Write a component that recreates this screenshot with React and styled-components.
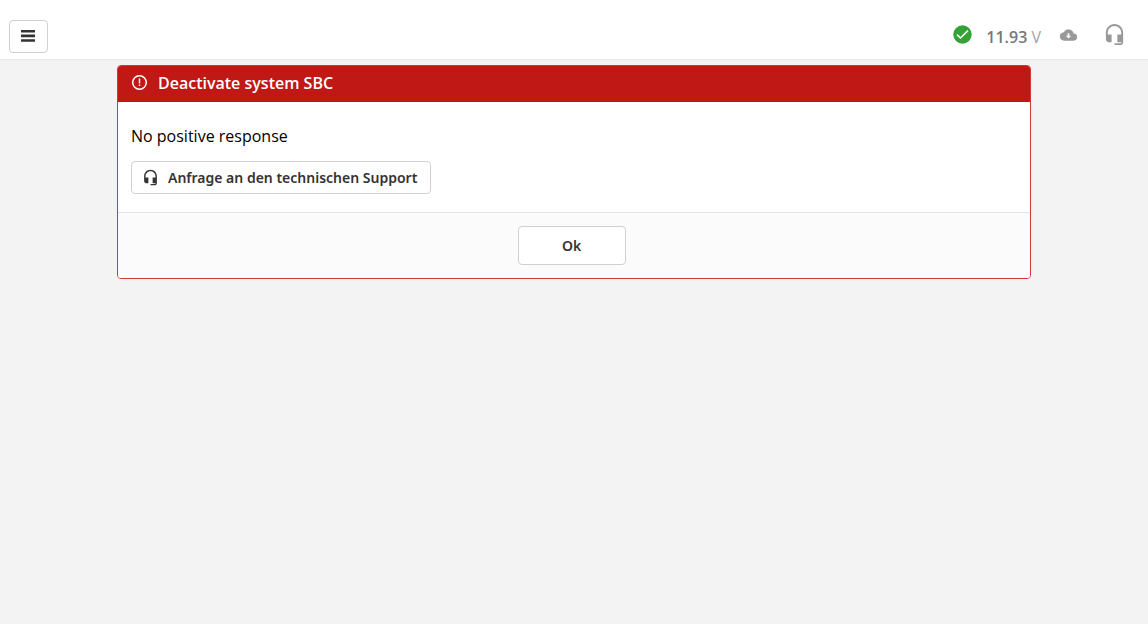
import React from 'react';
import styled, { createGlobalStyle } from 'styled-components';

const GlobalStyle = createGlobalStyle`
  *, *::before, *::after { box-sizing: border-box; }
  body {
    margin: 0;
    background: #fff;
    color: #000;
    font-family: "Open Sans", "Noto Sans", sans-serif;
    font-size: 16px;
  }
`;

const Page = styled.div`
  display: flex;
  flex-direction: column;
  min-height: 100vh;
  padding-bottom: 8px;
`;

const TopBar = styled.header`
  display: flex;
  align-items: center;
  justify-content: space-between;
  height: 60px;
  padding: 13px 22px 0 9px;
  border-bottom: 1px solid #eaeaea;
`;

const Button = styled.button`
  display: inline-flex;
  align-items: center;
  justify-content: center;
  border: 1px solid #d0d0d0;
  border-radius: 4px;
  background: #fff;
  color: #333;
  font: 600 14px/20px "Noto Sans", "Open Sans", sans-serif;
  cursor: pointer;
`;

const MenuButton = styled(Button)`
  width: 39px;
  height: 33px;
  padding: 0 1px 1px 0;
`;

const SupportButton = styled(Button)`
  height: 33px;
  gap: 9px;
  padding: 0 13px 0 10px;
`;

const OkButton = styled(Button)`
  width: 108px;
  height: 39px;
  margin-right: 5px;
`;

const Status = styled.div`
  display: flex;
  align-items: center;
  padding-bottom: 3px;
  color: #97999b;
`;

const Voltage = styled.span`
  margin: 4px 19px 0 14px;
  font-size: 16px;
  line-height: 22px;
  color: #a3a3a3;

  strong {
    font-weight: 600;
    color: #777;
  }
`;

const IconButton = styled.button`
  display: flex;
  padding: 0;
  border: 0;
  background: none;
  color: inherit;
  cursor: pointer;

  & + & { margin-left: 26px; }
`;

const Main = styled.main`
  flex: 1;
  padding: 5px 117px;
  background: #f3f3f3;
`;

const Dialog = styled.section`
  overflow: hidden;
  border: 1px solid #d0393a;
  border-radius: 4px;
  background: #fff;
`;

const DialogHeader = styled.header`
  display: flex;
  align-items: center;
  gap: 10px;
  height: 36px;
  padding: 0 13px 3px;
  background: #c01815;
  color: #fff;
`;

const Title = styled.h1`
  margin: 0;
  font-size: 16px;
  font-weight: 600;
  line-height: 22px;
`;

const DialogBody = styled.div`
  padding: 22px 13px 18px;
`;

const Message = styled.p`
  margin: 0 0 13px;
  font-size: 16px;
  line-height: 24px;
`;

const DialogFooter = styled.footer`
  display: flex;
  justify-content: center;
  padding: 13px;
  border-top: 1px solid #e4e4e4;
  background: #fbfbfb;
`;

const Icon = styled.svg`
  display: block;
  flex: none;
`;

const Headset = ({ size }) => (
  <Icon width={size} height={size} viewBox="0 0 24 24" fill="currentColor" aria-hidden="true">
    <path d="M12 1c-4.97 0-9 4.03-9 9v7c0 1.66 1.34 3 3 3h3v-8H5v-2c0-3.87 3.13-7 7-7s7 3.13 7 7v2h-4v8h4v1h-7v2h6c1.66 0 3-1.34 3-3V10c0-4.97-4.03-9-9-9z" />
  </Icon>
);

const Bars = () => (
  <Icon width="14" height="12" viewBox="0 0 14 12" fill="#333" aria-hidden="true">
    <path d="M0 0h14v2.6H0zM0 4.6h14v2.6H0zM0 9.2h14v2.6H0z" />
  </Icon>
);

const CheckCircle = () => (
  <Icon width="19" height="19" viewBox="0 0 19 19" role="img" aria-label="Connected">
    <circle cx="9.5" cy="9.5" r="9.2" fill="#33a336" />
    <path d="M4 9.6l3.4 3.4 7.6-7.4" fill="none" stroke="#fff" strokeWidth="1.6" />
  </Icon>
);

const CloudDownload = () => (
  <Icon width="17" height="12" viewBox="0 0 17 12" aria-hidden="true">
    <path
      d="M13.7 4.6A5.3 5.3 0 0 0 3.8 3.2 4.25 4.25 0 0 0 4.25 11.7h9.2a3.55 3.55 0 0 0 .25-7.1z"
      fill="currentColor"
    />
    <path d="M7.7 4.2h1.6v2.5h1.9L8.5 9.4 5.8 6.7h1.9z" fill="#fff" />
  </Icon>
);

const Alert = () => (
  <Icon width="17" height="17" viewBox="0 0 17 17" fill="none" stroke="#fff" aria-hidden="true">
    <circle cx="8.5" cy="8.5" r="6.8" strokeWidth="1.5" />
    <path d="M8.5 4.6v4.8M8.5 10.6v1.5" strokeWidth="1.4" />
  </Icon>
);

export default function App() {
  return (
    <>
      <GlobalStyle />
      <Page>
        <TopBar>
          <MenuButton type="button" aria-label="Menu"><Bars /></MenuButton>
          <Status>
            <CheckCircle />
            <Voltage><strong>11.93</strong> V</Voltage>
            <IconButton type="button" aria-label="Download"><CloudDownload /></IconButton>
            <IconButton type="button" aria-label="Support"><Headset size={23} /></IconButton>
          </Status>
        </TopBar>
        <Main>
          <Dialog role="alertdialog" aria-labelledby="dialog-title" aria-describedby="dialog-message">
            <DialogHeader>
              <Alert />
              <Title id="dialog-title">Deactivate system SBC</Title>
            </DialogHeader>
            <DialogBody>
              <Message id="dialog-message">No positive response</Message>
              <SupportButton type="button">
                <Headset size={17} />
                Anfrage an den technischen Support
              </SupportButton>
            </DialogBody>
            <DialogFooter>
              <OkButton type="button">Ok</OkButton>
            </DialogFooter>
          </Dialog>
        </Main>
      </Page>
    </>
  );
}
